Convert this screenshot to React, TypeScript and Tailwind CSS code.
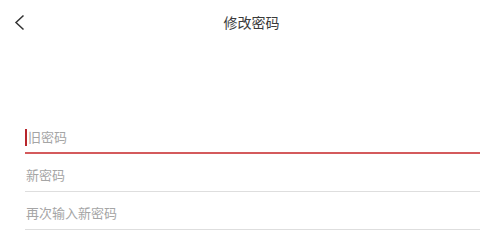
import React, { useState } from 'react';

const fields = [
  { key: 'old', placeholder: '旧密码' },
  { key: 'new', placeholder: '新密码' },
  { key: 'confirm', placeholder: '再次输入新密码' },
];

export default function App() {
  const [focused, setFocused] = useState('old');

  return (
    <div className="w-[503px] h-[245px] bg-white font-['Liberation_Sans','Noto_Sans_CJK_SC',sans-serif] overflow-hidden">
      {/* 顶部导航 */}
      <div className="relative h-[46px] flex items-center justify-center">
        <button className="absolute left-[12px] top-[14px] w-[14px] h-[17px] flex items-center justify-center">
          <svg width="13" height="17" viewBox="0 0 13 17" fill="none" stroke="#333" strokeWidth={1.5}>
            <path d="M10.5 1.5 L3 8.5 L10.5 15.5" />
          </svg>
        </button>
        <span className="text-[14px] text-[#3a3a3a] leading-none">修改密码</span>
      </div>

      {/* 表单 */}
      <div className="mt-[70px] pl-[25px] pr-[23px]">
        {fields.map((f) => {
          const active = focused === f.key;
          return (
            <div key={f.key} className="h-[38px] flex flex-col justify-end">
              <div className={`flex items-center ${active ? 'pb-[6px]' : 'pb-[7px]'}`}>
                {active && <span className="w-[2px] h-[17px] bg-[#b8252b] mr-[1px]" />}
                <input
                  className={`w-full h-[17px] bg-transparent outline-none text-[13px] leading-[17px] text-[#333] placeholder:text-[#a5a5a5] ${active ? 'pl-0' : 'pl-[1px]'}`}
                  placeholder={f.placeholder}
                  type="password"
                  onFocus={() => setFocused(f.key)}
                />
              </div>
              <div className={active ? 'h-[2px] bg-[#d45a5c]' : 'h-px bg-[#dedede]'} />
            </div>
          );
        })}
      </div>
    </div>
  );
}
